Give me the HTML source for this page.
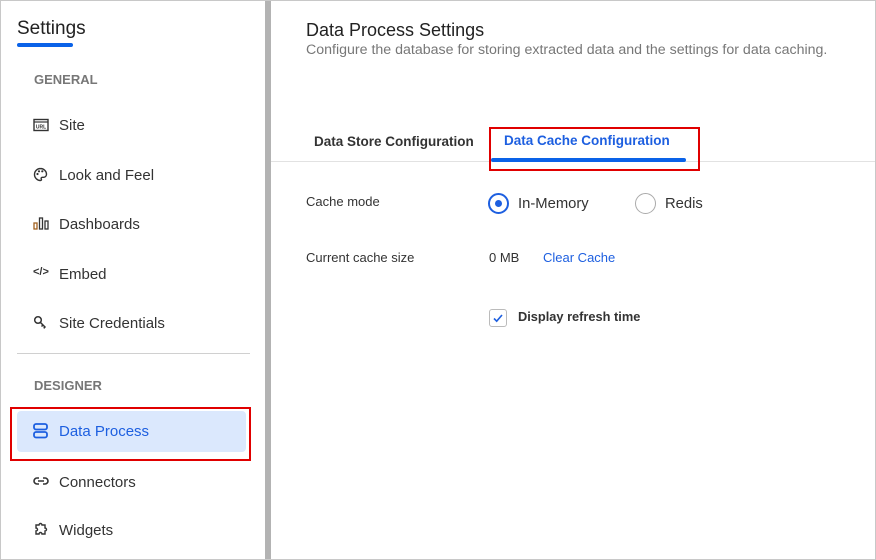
<!DOCTYPE html>
<html><head><style>
*{margin:0;padding:0;box-sizing:border-box}
body{width:876px;height:560px;overflow:hidden;background:#fff;font-family:"Liberation Sans",Arial,sans-serif;position:relative;color:#333}
.a{position:absolute;white-space:nowrap}
.frame{position:absolute;left:0;top:0;width:876px;height:560px;border:1px solid #c8c8c8}
.nav{font-size:15px;color:#333}
.ic{position:absolute}
.sec{font-size:13px;font-weight:bold;color:#777}
</style></head><body>
<div class="frame"></div>
<div class="a" style="left:265px;top:1px;width:6px;height:558px;background:#b3b3b3"></div>
<div class="a" style="left:17px;top:18px;font-size:19px;color:#222">Settings</div>
<div class="a" style="left:17px;top:43px;width:56px;height:4px;border-radius:2px;background:#0a62e8"></div>
<div class="a sec" style="left:34px;top:72px">GENERAL</div>

<svg class="ic" style="left:33px;top:118px" width="16" height="14" viewBox="0 0 16 14"><rect x="1" y="1.5" width="14" height="11" fill="none" stroke="#333" stroke-width="1.4"/><line x1="1" y1="4" x2="15" y2="4" stroke="#333" stroke-width="1.2"/><text x="8" y="10.5" font-size="5" text-anchor="middle" fill="#333" font-family="Liberation Sans" font-weight="bold">URL</text></svg>
<div class="a nav" style="left:59px;top:117px">Site</div>
<svg class="ic" style="left:33px;top:167px" width="15" height="15" viewBox="0 0 15 15"><path d="M7.5 1.5a6 6 0 1 0 0 12c1 0 1.2-.8.8-1.5-.5-.8 0-1.7 1-1.7h1.5a3 3 0 0 0 2.7-3c0-3.2-2.7-5.8-6-5.8z" fill="none" stroke="#333" stroke-width="1.4"/><circle cx="4.5" cy="7" r="1.1" fill="#333"/><circle cx="6" cy="4.3" r="1.1" fill="#333"/><circle cx="9.3" cy="4.3" r="1.1" fill="#333"/></svg>
<div class="a nav" style="left:59px;top:167px">Look and Feel</div>
<svg class="ic" style="left:33px;top:216px" width="16" height="14" viewBox="0 0 16 14"><rect x="1" y="7" width="3" height="6" fill="none" stroke="#a06020" stroke-width="1.3"/><rect x="6.5" y="2" width="3" height="11" fill="none" stroke="#333" stroke-width="1.3"/><rect x="12" y="5" width="3" height="8" fill="none" stroke="#333" stroke-width="1.3"/></svg>
<div class="a nav" style="left:59px;top:216px">Dashboards</div>
<div class="a" style="left:33px;top:266px;font-size:11px;color:#333;font-weight:bold">&lt;/&gt;</div>
<div class="a nav" style="left:59px;top:266px">Embed</div>
<svg class="ic" style="left:33px;top:315px" width="15" height="15" viewBox="0 0 15 15"><circle cx="5" cy="5" r="3.3" fill="none" stroke="#333" stroke-width="1.5"/><path d="M7.5 7.5l5 5M10 10l-1.5 1.5M12 12l-1.3 1.3" stroke="#333" stroke-width="1.5" fill="none"/></svg>
<div class="a nav" style="left:59px;top:315px">Site Credentials</div>
<div class="a" style="left:17px;top:353px;width:233px;height:1px;background:#d0d0d0"></div>
<div class="a sec" style="left:34px;top:378px">DESIGNER</div>
<div class="a" style="left:10px;top:407px;width:241px;height:54px;border:2px solid #e00000"></div>
<div class="a" style="left:17px;top:411px;width:229px;height:41px;border-radius:4px;background:#dbe8fd"></div>
<svg class="ic" style="left:33px;top:423px" width="15" height="16" viewBox="0 0 15 16"><rect x="1" y="1" width="13" height="5.5" rx="2" fill="none" stroke="#1d5fe0" stroke-width="1.8"/><rect x="1" y="9" width="13" height="5.5" rx="2" fill="none" stroke="#1d5fe0" stroke-width="1.8"/></svg>
<div class="a nav" style="left:59px;top:423px;color:#1d5fe0">Data Process</div>
<svg class="ic" style="left:33px;top:476px" width="16" height="10" viewBox="0 0 16 10"><path d="M6 2H4a3 3 0 0 0 0 6h2M10 2h2a3 3 0 0 1 0 6h-2M5 5h6" fill="none" stroke="#333" stroke-width="1.6"/></svg>
<div class="a nav" style="left:59px;top:474px">Connectors</div>
<svg class="ic" style="left:33px;top:522px" width="15" height="15" viewBox="0 0 15 15"><path d="M3 3h3a1.5 1.5 0 1 1 3 0h3v3a1.5 1.5 0 1 1 0 3v3H9a1.5 1.5 0 1 0-3 0H3V9a1.5 1.5 0 1 0 0-3z" fill="none" stroke="#333" stroke-width="1.4"/></svg>
<div class="a nav" style="left:59px;top:522px">Widgets</div>

<div class="a" style="left:306px;top:20px;font-size:18px;color:#222">Data Process Settings</div>
<div class="a" style="left:306px;top:42px;font-size:14.2px;color:#777">Configure the database for storing extracted data and the settings for data caching.</div>
<div class="a" style="left:271px;top:161px;width:604px;height:1px;background:#e2e2e2"></div>
<div class="a" style="left:314px;top:134px;font-size:13.5px;font-weight:bold;color:#333">Data Store Configuration</div>
<div class="a" style="left:489px;top:127px;width:211px;height:44px;border:2px solid #e00000"></div>
<div class="a" style="left:504px;top:133px;font-size:13.5px;font-weight:bold;color:#1d5fe0">Data Cache Configuration</div>
<div class="a" style="left:491px;top:158px;width:195px;height:4px;border-radius:2px;background:#0a62e8"></div>

<div class="a" style="left:306px;top:194px;font-size:13px;color:#333">Cache mode</div>
<div class="a" style="left:488px;top:193px;width:21px;height:21px;border:2px solid #1d5fe0;border-radius:50%"></div>
<div class="a" style="left:495px;top:200px;width:7px;height:7px;background:#1d5fe0;border-radius:50%"></div>
<div class="a" style="left:518px;top:196px;font-size:14.8px;color:#333">In-Memory</div>
<div class="a" style="left:635px;top:193px;width:21px;height:21px;border:1.5px solid #aaa;border-radius:50%"></div>
<div class="a" style="left:665px;top:196px;font-size:14.8px;color:#333">Redis</div>

<div class="a" style="left:306px;top:250px;font-size:13px;color:#333">Current cache size</div>
<div class="a" style="left:489px;top:250px;font-size:13px;color:#333">0 MB</div>
<div class="a" style="left:543px;top:250px;font-size:13px;color:#1d5fe0">Clear Cache</div>

<div class="a" style="left:489px;top:309px;width:18px;height:18px;border:1px solid #bbb;border-radius:3px"></div>
<svg class="ic" style="left:492px;top:312px" width="12" height="12" viewBox="0 0 12 12"><path d="M2 6.5l2.7 2.7L10 3" fill="none" stroke="#1d5fe0" stroke-width="1.6"/></svg>
<div class="a" style="left:518px;top:309px;font-size:12.8px;font-weight:bold;color:#333">Display refresh time</div>
</body></html>
